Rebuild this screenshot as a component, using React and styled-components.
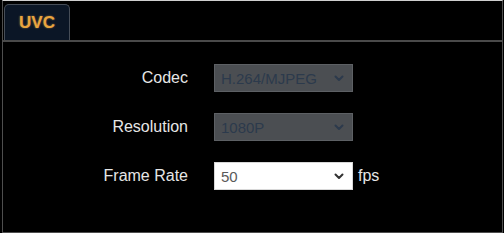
import React from "react"
import styled, { createGlobalStyle } from "styled-components"

const GlobalStyle = createGlobalStyle`
  html, body {
    margin: 0;
    padding: 0;
    background: #000;
  }
  body {
    font-family: "Liberation Sans", Arial, sans-serif;
  }
`

const Panel = styled.div`
  box-sizing: border-box;
  width: 501px;
  height: 233px;
  margin-left: 2px;
  background: #000;
  border-top: 1px solid #cfcfcf;
  border-left: 1px solid #4e4e4e;
  border-right: 1px solid #4e4e4e;
  border-bottom: 1px solid #4e4e4e;
  display: flex;
  flex-direction: column;
`

const TabBar = styled.div`
  display: flex;
  align-items: flex-end;
  height: 39px;
  padding-left: 1px;
  border-bottom: 2px solid #4a4a4a;
`

const Tab = styled.div`
  box-sizing: border-box;
  width: 66px;
  height: 36px;
  display: flex;
  align-items: center;
  justify-content: center;
  background: #0b1626;
  border: 1px solid #464d57;
  border-bottom: none;
  border-radius: 5px 5px 0 0;
  color: #eaa53e;
  font-weight: bold;
  font-size: 17px;
  text-shadow: 0 0 2px rgba(255, 190, 90, 0.55);
`

const Form = styled.div`
  display: grid;
  grid-template-columns: 211px 139px auto;
  grid-auto-rows: 28px;
  row-gap: 21px;
  padding-top: 22px;
  align-items: center;
`

const Label = styled.div`
  grid-column: 1;
  justify-self: end;
  margin-right: 26px;
  text-align: right;
  color: #e6e6e6;
  font-size: 16px;
`

const Select = styled.div`
  box-sizing: border-box;
  grid-column: 2;
  height: 28px;
  display: flex;
  align-items: center;
  justify-content: space-between;
  padding: 0 8px 0 6px;
  font-size: 15px;
  background: ${({ disabled }) => (disabled ? "#4b4e52" : "#ffffff")};
  border: 1px solid ${({ disabled }) => (disabled ? "#5d6064" : "#d8d8d8")};
  color: ${({ disabled }) => (disabled ? "#2c3a4c" : "#5a5a5a")};
`

const Unit = styled.div`
  grid-column: 3;
  color: #e6e6e6;
  font-size: 16px;
  padding-left: 5px;
`

const Chevron = ({ color }) => (
  <svg width="10" height="7" viewBox="0 0 10 7">
    <path
      d="M1.5 1.5 L5 5 L8.5 1.5"
      fill="none"
      stroke={color}
      strokeWidth="2"
      strokeLinecap="round"
      strokeLinejoin="round"
    />
  </svg>
)

const rows = [
  { label: "Codec", value: "H.264/MJPEG", disabled: true },
  { label: "Resolution", value: "1080P", disabled: true },
  { label: "Frame Rate", value: "50", disabled: false, unit: "fps" },
]

const App = () => {
  return (
    <>
      <GlobalStyle />
      <Panel>
        <TabBar>
          <Tab>UVC</Tab>
        </TabBar>
        <Form>
          {rows.map((row) => (
            <React.Fragment key={row.label}>
              <Label>{row.label}</Label>
              <Select disabled={row.disabled}>
                <span>{row.value}</span>
                <Chevron color={row.disabled ? "#2c3a4c" : "#333333"} />
              </Select>
              {row.unit ? <Unit>{row.unit}</Unit> : <span />}
            </React.Fragment>
          ))}
        </Form>
      </Panel>
    </>
  )
}

export default App
